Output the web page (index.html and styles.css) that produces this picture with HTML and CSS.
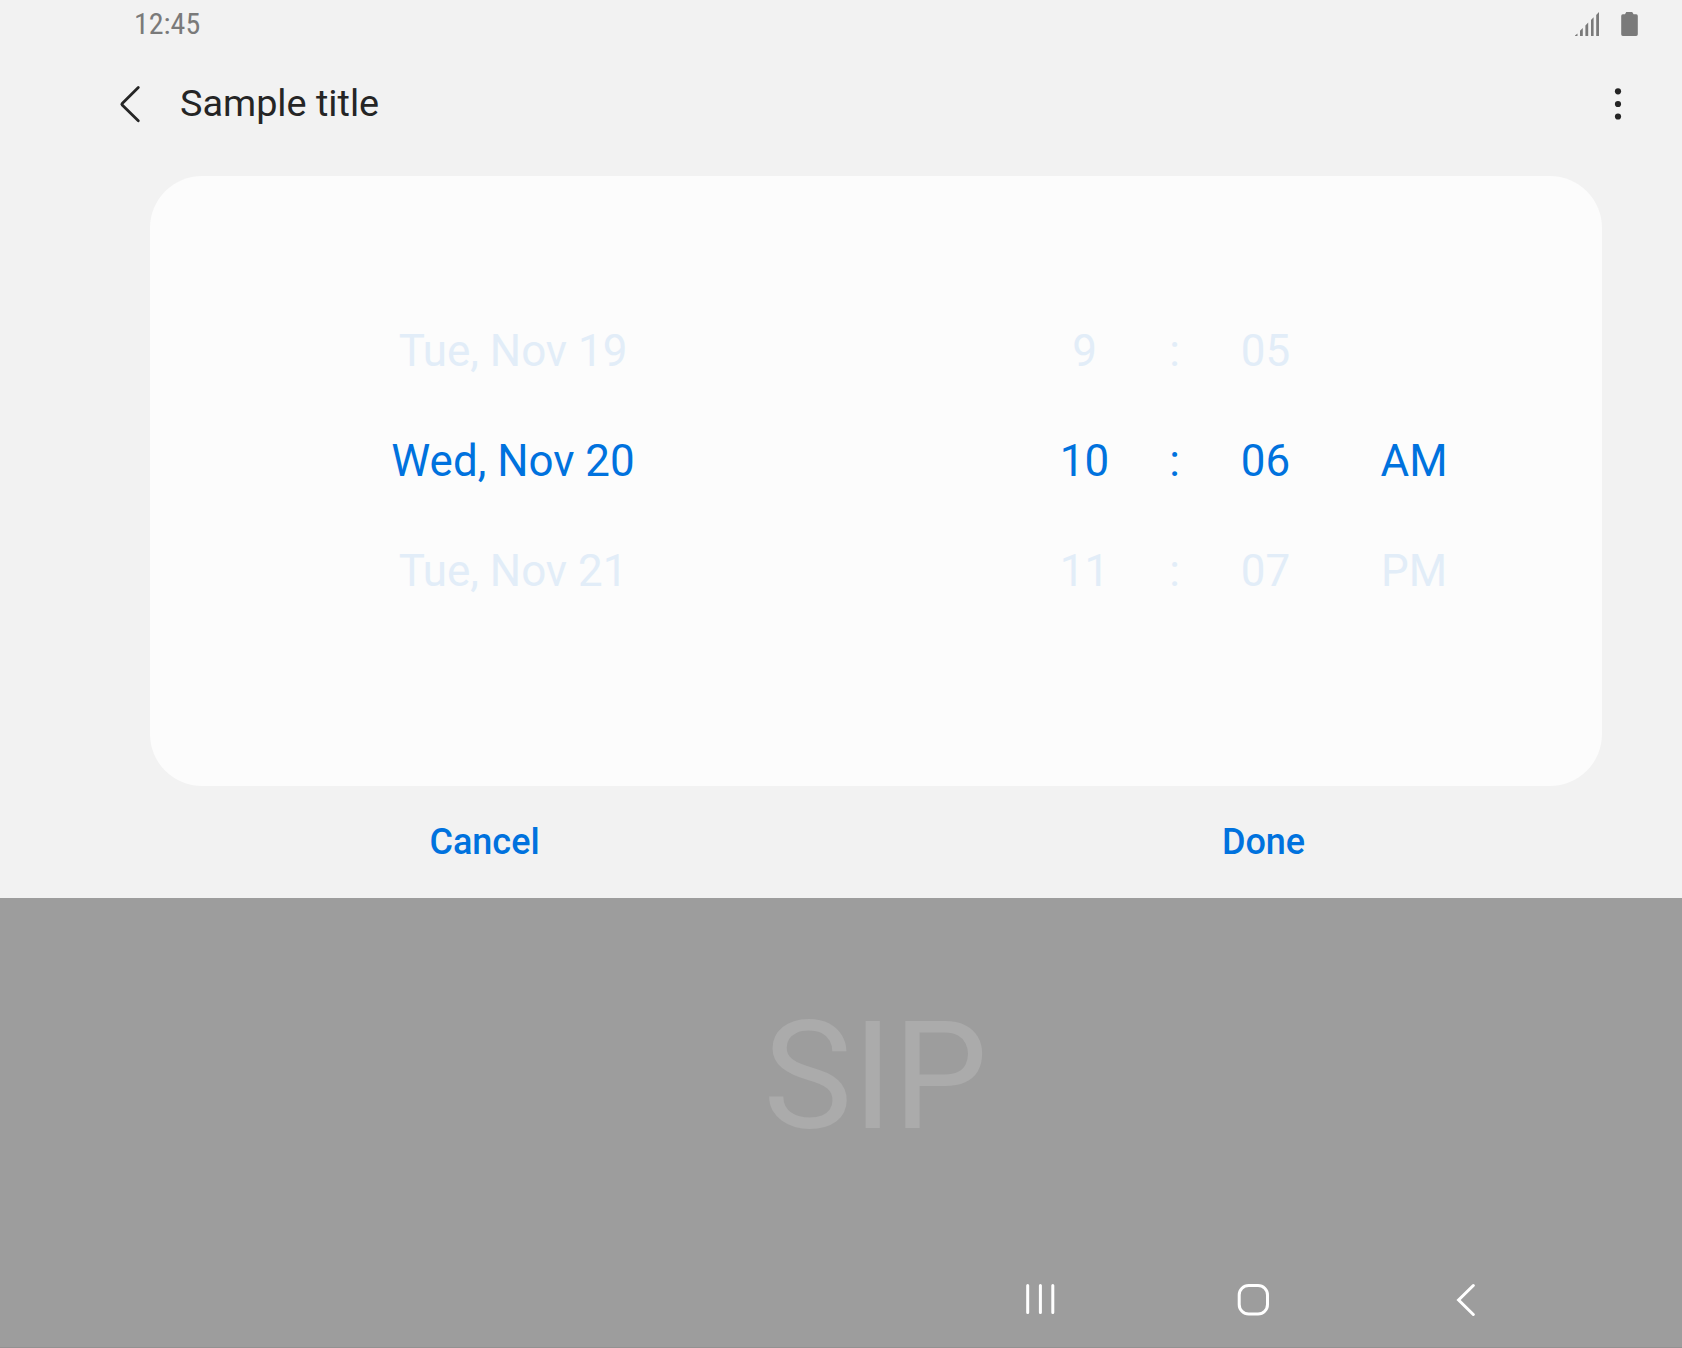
FILE: index.html
```html
<!DOCTYPE html>
<html lang="en">
<head>
<meta charset="utf-8">
<title>Sample title</title>
<link rel="stylesheet" href="styles.css">
</head>
<body>
<div class="screen">
  <header class="status">
    <span class="clock">12:45</span>
    <div class="status-icons">
      <svg width="24" height="24" viewBox="0 0 24 24"><path d="M0 24V23.6L2.5 21.6V24ZM5 24V18.8L7.8 16V24ZM10.4 24V13.6L13.2 10.6V24ZM16 24V8L18.6 5.2V24ZM21.2 24V3L24 0V24Z"/></svg>
      <svg width="17" height="24" viewBox="0 0 17 24"><path d="M4 2.2L5.2 0H11.2L12.6 2.2H15.3Q16.8 2.4 16.8 4V22.2Q16.8 24 15.2 24H1.8Q.2 24 .2 22.2V4Q.2 2.4 1.8 2.2Z"/></svg>
    </div>
  </header>
  <div class="app-bar">
    <svg class="back" width="22" height="38" viewBox="0 0 22 38"><path d="M19.3 2.5L3.2 18.4Q2.4 19.2 3.2 20L19.3 35.8"/></svg>
    <h1 class="title">Sample title</h1>
    <svg class="more" width="8" height="34" viewBox="0 0 8 34"><circle cx="4" cy="4.3" r="3.1"/><circle cx="4" cy="17" r="3.1"/><circle cx="4" cy="29.5" r="3.1"/></svg>
  </div>
  <main class="card">
    <div class="column"><span>Tue, Nov 19</span><span class="selected">Wed, Nov 20</span><span>Tue, Nov 21</span></div>
    <div class="time">
      <div class="column"><span>9</span><span class="selected">10</span><span>11</span></div>
      <div class="column"><span>:</span><span class="selected">:</span><span>:</span></div>
      <div class="column"><span>05</span><span class="selected">06</span><span>07</span></div>
      <div class="column"><span></span><span class="selected">AM</span><span>PM</span></div>
    </div>
  </main>
  <div class="actions">
    <button class="action">Cancel</button>
    <button class="action">Done</button>
  </div>
  <footer class="keyboard">
    <div class="keyboard-label">SIP</div>
    <nav class="nav">
      <svg width="32" height="34" viewBox="0 0 32 34"><path d="M3.7 3.5V30.5M16.4 3.5V30.5M28.8 3.5V30.5"/></svg>
      <svg width="34" height="34" viewBox="0 0 34 34"><rect x="3.2" y="3.5" width="28.3" height="28.5" rx="9.5"/></svg>
      <svg width="27" height="34" viewBox="0 0 27 34"><path d="M23.3 3.5L8.6 18L23.3 32.5"/></svg>
    </nav>
  </footer>
</div>
</body>
</html>
```
FILE: styles.css
```css
* { box-sizing: border-box; }

body {
  margin: 0;
  font-family: Roboto, "Liberation Sans", sans-serif;
  color: #252525;
}

svg { display: block; flex: none; }

.screen {
  display: flex;
  flex-direction: column;
  width: 1682px;
  height: 1348px;
  overflow: hidden;
  background: #f2f2f2;
}

.status {
  display: flex;
  justify-content: space-between;
  align-items: center;
  height: 48px;
  padding: 0 44px 0 134px;
}

.clock {
  font-size: 30px;
  line-height: 48px;
  font-stretch: 75%;
  color: #7a7a7a;
}

.status-icons {
  display: flex;
  gap: 22px;
  fill: #7a7a7a;
}

.app-bar {
  display: flex;
  align-items: center;
  height: 112px;
  padding: 0 60px 0 119px;
}

.back {
  fill: none;
  stroke: #252525;
  stroke-width: 2.8;
  stroke-linecap: round;
  stroke-linejoin: round;
}

.title {
  flex: 1;
  margin: 0 0 2px 39px;
  font-size: 37.8px;
  font-weight: 400;
  line-height: 48px;
}

.more { fill: #252525; }

.card {
  display: grid;
  grid-template-columns: 1fr 1fr;
  align-content: start;
  height: 610px;
  margin: 16px 80px 0 150px;
  padding-top: 120px;
  border-radius: 52px;
  background: #fcfcfc;
}

.time {
  display: grid;
  grid-template-columns: 140px 40px 142px 155px;
  padding-left: 138.5px;
}

.column {
  display: grid;
  grid-auto-rows: 110px;
  font-size: 43.9px;
  line-height: 110px;
  text-align: center;
  white-space: nowrap;
  color: #e2edf8;
}

.selected { color: #0072de; }

.actions {
  display: grid;
  grid-template-columns: 779px 779px;
  height: 112px;
  padding-left: 95px;
}

.action {
  border: 0;
  padding: 0;
  background: none;
  font: 500 36px/112px Roboto, "Liberation Sans", sans-serif;
  color: #0072de;
}

.keyboard {
  display: flex;
  flex-direction: column;
  height: 450px;
  background: #9d9d9d;
  border-bottom: 1px solid #929292;
}

.keyboard-label {
  height: 384px;
  padding: 91px 0 0 69px;
  font-size: 150px;
  line-height: 176px;
  text-align: center;
  color: #ababab;
}

.nav {
  display: flex;
  gap: 180px;
  padding-left: 1024px;
  fill: none;
  stroke: #fff;
  stroke-width: 3;
  stroke-linecap: round;
}
```
